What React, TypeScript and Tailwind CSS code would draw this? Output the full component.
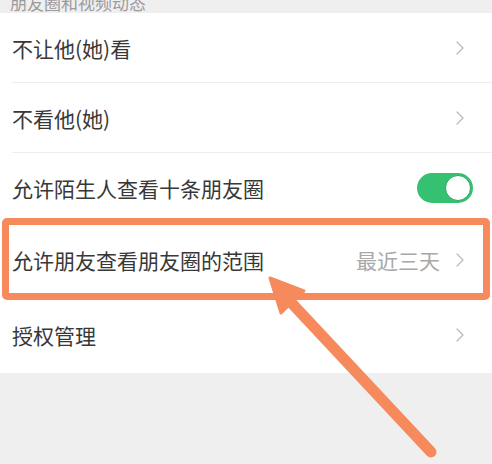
import { ChevronRight } from "lucide-react";

const font = { fontFamily: '"Noto Sans CJK SC", "Noto Sans", sans-serif' };

function Row({
  label,
  h,
  last,
  right,
}: {
  label: string;
  h: string;
  last?: boolean;
  right?: React.ReactNode;
}) {
  return (
    <div className={`relative flex items-center pl-3 pr-[20px] ${h}`}>
      <span className="flex-1 text-[21px] leading-none text-[#383838]">{label}</span>
      {right ?? <ChevronRight size={24} strokeWidth={1.2} className="text-[#b8b8b8]" />}
      {!last && <div className="absolute left-3 right-0 bottom-0 h-px bg-[#ededed]" />}
    </div>
  );
}

function Toggle() {
  return (
    <div className="mr-[-1px] flex h-[30px] w-[56px] items-center justify-end rounded-full bg-[#35c172] pr-[2px]">
      <div className="h-[26px] w-[26px] rounded-full border border-[#2aa860] bg-white" />
    </div>
  );
}

export default function App() {
  return (
    <div className="relative h-[464px] w-[492px] overflow-hidden bg-[#efefef]" style={font}>
      <div className="relative h-[13px] overflow-hidden">
        <span className="absolute bottom-[2px] left-[10px] text-[17px] leading-none text-[#9b9b9b]">
          朋友圈和视频动态
        </span>
      </div>
      <div className="bg-white">
        <Row label="不让他(她)看" h="h-[70px]" />
        <Row label="不看他(她)" h="h-[70px]" />
        <Row label="允许陌生人查看十条朋友圈" h="h-[70px]" right={<Toggle />} />
        <Row
          label="允许朋友查看朋友圈的范围"
          h="h-[74px]"
          right={
            <div className="flex items-center gap-[8px]">
              <span className="text-[21px] leading-none text-[#a8a8a8]">最近三天</span>
              <ChevronRight size={24} strokeWidth={1.2} className="text-[#b8b8b8]" />
            </div>
          }
        />
        <Row label="授权管理" h="h-[76px]" last />
      </div>

      {/* annotation */}
      <div className="absolute left-[2px] top-[218px] h-[82px] w-[488px] rounded-[5px] border-[7px] border-[#f68a5c]" />
      <svg className="absolute inset-0" width="492" height="464" viewBox="0 0 492 464">
        <line x1="431" y1="452" x2="285" y2="296" stroke="#f68a5c" strokeWidth="11" strokeLinecap="round" />
        <polygon points="270,278 304,291 281,313" fill="#f68a5c" stroke="#f68a5c" strokeWidth="3" strokeLinejoin="round" />
      </svg>
    </div>
  );
}
